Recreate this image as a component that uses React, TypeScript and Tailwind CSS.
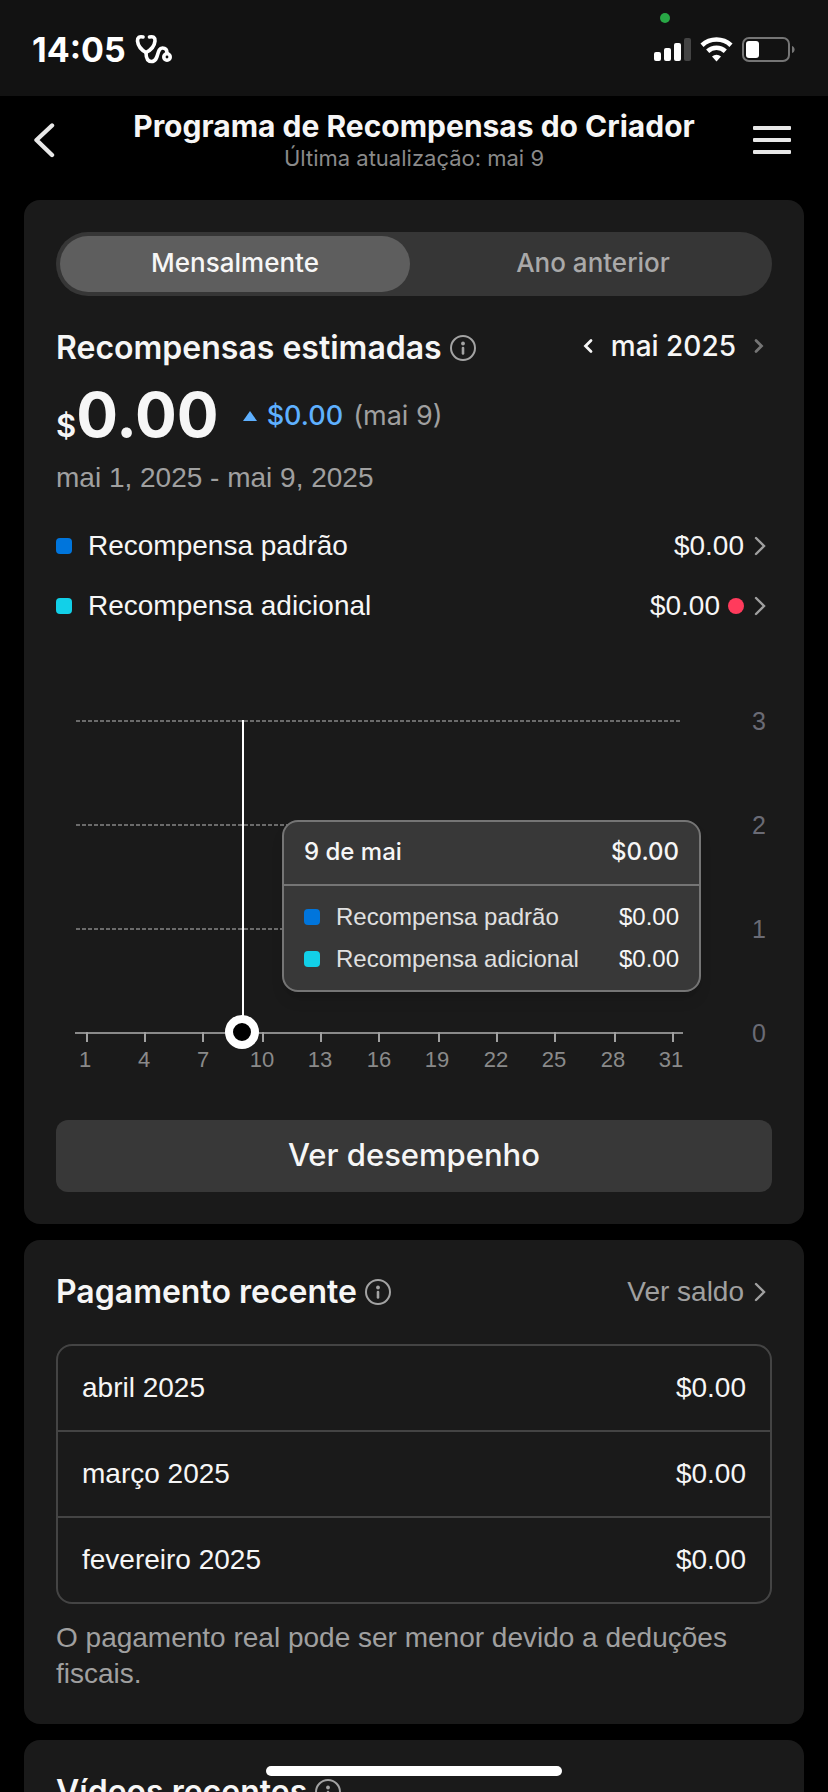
import { useState } from 'react'
import clsx from 'clsx'

type Reward = { name: string; amount: string; color: string; unread?: boolean }

const REWARDS: Reward[] = [
  { name: 'Recompensa padrão', amount: '$0.00', color: 'bg-[#0075dc]' },
  { name: 'Recompensa adicional', amount: '$0.00', color: 'bg-[#12d0e8]', unread: true },
]

const PAYMENTS = [
  { month: 'abril 2025', amount: '$0.00' },
  { month: 'março 2025', amount: '$0.00' },
  { month: 'fevereiro 2025', amount: '$0.00' },
]

const TABS = ['Mensalmente', 'Ano anterior']

// day, tick x, label x
const DAYS = [
  [1, 31, 29],
  [4, 89, 88],
  [7, 147, 147],
  [10, 207, 206],
  [13, 265, 264],
  [16, 323, 323],
  [19, 383, 381],
  [22, 441, 440],
  [25, 499, 498],
  [28, 559, 557],
  [31, 617, 615],
]

const GRID = [
  { value: 3, y: 85 },
  { value: 2, y: 189 },
  { value: 1, y: 293 },
]

function InfoIcon() {
  return (
    <svg width="26" height="26" viewBox="0 0 26 26" fill="none" aria-hidden="true">
      <circle cx="13" cy="13" r="12" stroke="#a3a3a3" strokeWidth="2" />
      <circle cx="13" cy="8.5" r="1.9" fill="#a3a3a3" />
      <path d="M13 13v5.500" stroke="#a3a3a3" strokeWidth="2.6" strokeLinecap="round" />
    </svg>
  )
}

function ChevronIcon({ className }: { className?: string }) {
  return (
    <svg width="12" height="20" viewBox="0 0 12 20" fill="none" className={className} aria-hidden="true">
      <path d="M2 2 10 10l-8 8" stroke="currentColor" strokeWidth="2.4" strokeLinecap="round" />
    </svg>
  )
}

// Smaller, heavier chevron used by the month switcher
function MonthChevronIcon({ className }: { className?: string }) {
  return (
    <svg width="10" height="16" viewBox="0 0 10 16" fill="none" className={className} aria-hidden="true">
      <path d="M2 2.500 7.500 8 2 13.500" stroke="currentColor" strokeWidth="2.8" strokeLinecap="round" />
    </svg>
  )
}

function StatusBar() {
  return (
    <div className="relative flex h-24 shrink-0 items-center justify-between bg-[#121212] px-8 pt-0.5">
      <div className="flex items-center gap-2 text-white">
        <span className="font-[Inter,sans-serif] text-[34px] font-bold">14:05</span>
        <svg width="40" height="32" viewBox="0 0 40 32" fill="none" stroke="white" strokeWidth="3.6" strokeLinecap="round">
          <path d="M9 4C5.500 3 3.500 4.500 3.500 8c.5 5 4 9 8.500 11.500C17 17 20.500 13 21 8c.3-3.500-2-5-5.500-4" />
          <path d="M12 19.500c0 6 1.500 9 5.500 9 8 0 4.500-13.500 11-13.500 3 0 4.500 2 4.500 5" />
          <circle cx="33" cy="24" r="3.200" />
        </svg>
      </div>
      <span className="absolute top-[13px] right-[158px] size-2.5 rounded-full bg-[#28a745]" />
      <svg width="144" height="28" viewBox="0 0 144 28" fill="none" aria-label="Sinal, Wi-Fi e bateria">
        <rect x="2" y="17" width="7" height="9" rx="2" fill="white" />
        <rect x="12" y="13" width="7" height="13" rx="2" fill="white" />
        <rect x="22" y="8" width="7" height="18" rx="2" fill="white" />
        <rect x="32" y="3" width="7" height="23" rx="2" fill="#444" />
        <g stroke="white" strokeWidth="4.600">
          <path d="M50 10.200a21.500 21.500 0 0 1 29 0" />
          <path d="M55.700 16.200a13 13 0 0 1 17.600 0" />
        </g>
        <path d="M60 21.500a6.600 6.600 0 0 1 9 0l-4.500 5z" fill="white" />
        <rect x="91" y="3" width="46" height="23" rx="6" stroke="#757575" strokeWidth="2" />
        <rect x="94" y="6" width="13" height="17" rx="3" fill="white" />
        <path d="M140 11c3.500 1 3.500 6 0 7z" fill="#757575" />
      </svg>
    </div>
  )
}

function Header() {
  return (
    <header className="flex h-[104px] shrink-0 items-start justify-between px-8 pt-3">
      <button aria-label="Voltar" className="mt-3.5 w-12 text-[#e8e8e8]">
        <svg width="24" height="36" viewBox="0 0 24 36" fill="none">
          <path d="M20 3.500 4.500 18 20 33" stroke="currentColor" strokeWidth="4.400" strokeLinecap="round" strokeLinejoin="round" />
        </svg>
      </button>
      <div className="text-center font-[Inter,sans-serif]">
        <h1 className="text-[30px] leading-9 font-bold text-[#f6f6f6]">Programa de Recompensas do Criador</h1>
        <p className="text-[22px] leading-7 text-[#8a8a8a]">Última atualização: mai 9</p>
      </div>
      <button aria-label="Menu" className="mt-3.5 w-12 text-[#e8e8e8]">
        <svg width="48" height="36" viewBox="0 0 48 36" fill="currentColor">
          <rect x="5" y="4" width="38" height="4" rx="1" />
          <rect x="5" y="16" width="38" height="4" rx="1" />
          <rect x="5" y="28" width="38" height="4" rx="1" />
        </svg>
      </button>
    </header>
  )
}

function SectionTitle({ children }: { children: string }) {
  return (
    <div className="flex items-center gap-2">
      <h2 className="font-[Inter,sans-serif] text-[32px] leading-10 font-semibold text-[#f6f6f6]">{children}</h2>
      <button aria-label="Mais informações">
        <InfoIcon />
      </button>
    </div>
  )
}

function Tooltip() {
  return (
    <div className="absolute top-[184px] left-[226px] w-[419px] rounded-2xl border-2 border-[#757575] bg-[#383838] text-[24px] shadow-lg">
      <div className="flex h-16 items-center justify-between border-b-2 border-[#757575] px-5 pb-0.5 font-[Inter,sans-serif] font-medium">
        <span>9 de mai</span>
        <span>$0.00</span>
      </div>
      <ul className="pt-2.5 pb-2.5">
        {REWARDS.map((r) => (
          <li key={r.name} className="flex h-[42px] items-center px-5">
            <span className={clsx('mr-4 size-4 rounded', r.color)} />
            <span className="flex-1 text-[#e0e0e0]">{r.name}</span>
            <span>{r.amount}</span>
          </li>
        ))}
      </ul>
    </div>
  )
}

function RewardsChart() {
  return (
    <div className="relative">
      <svg viewBox="0 0 716 452" className="w-full font-['Liberation_Sans',Arial,sans-serif]">
        {GRID.map((g) => (
          <g key={g.value}>
            <path d={`M20 ${g.y}H624`} stroke="#6b6b6b" strokeWidth="2" strokeDasharray="4 2" />
            <text x="703" y={g.y + 9} textAnchor="middle" fontSize="25" fill="#6a6b75">
              {g.value}
            </text>
          </g>
        ))}
        <text x="703" y="406" textAnchor="middle" fontSize="25" fill="#6a6b75">
          0
        </text>
        <path d="M19 397H627" stroke="#8a8a8a" strokeWidth="2" />
        {DAYS.map(([day, tick, label]) => (
          <g key={day}>
            <path d={`M${tick} 396v10`} stroke="#a0a0a0" strokeWidth="2" />
            <text x={label} y="431" textAnchor="middle" fontSize="22" fill="#8a8a8a">
              {day}
            </text>
          </g>
        ))}
        <path d="M187 84v300" stroke="white" strokeWidth="2" />
        <circle cx="186" cy="396" r="13" fill="black" stroke="white" strokeWidth="8" />
      </svg>
      <Tooltip />
    </div>
  )
}

function EstimatedRewards() {
  const [tab, setTab] = useState(TABS[0])

  return (
    <section className="rounded-2xl bg-[#1a1a1a] p-8">
      <div role="tablist" className="flex h-16 gap-2 rounded-full bg-[#363636] p-1">
        {TABS.map((t) => (
          <button
            key={t}
            role="tab"
            aria-selected={t === tab}
            onClick={() => setTab(t)}
            className={clsx(
              'flex-1 rounded-full pb-1 font-[Inter,sans-serif] text-[26px] font-medium',
              t === tab ? 'bg-[#5e5e5e] text-[#f6f6f6]' : 'text-[#a9a9a9]',
            )}
          >
            {t}
          </button>
        ))}
      </div>

      <div className="mt-[30px] flex h-11 items-center justify-between">
        <SectionTitle>Recompensas estimadas</SectionTitle>
        <div className="flex items-center gap-[18px] pb-1 font-[Inter,sans-serif] text-[28px] font-medium">
          <button aria-label="Mês anterior">
            <MonthChevronIcon className="rotate-180" />
          </button>
          <span>mai 2025</span>
          <button aria-label="Próximo mês" disabled className="mr-2 text-[#757575]">
            <MonthChevronIcon />
          </button>
        </div>
      </div>

      <div className="mt-3.5 flex h-16 items-center font-[Inter,sans-serif] text-[27px]">
        <p className="flex items-baseline text-[#f6f6f6]">
          <span className="text-[31px] font-semibold">$</span>
          <span className="text-[62px] leading-16 font-bold">0.00</span>
        </p>
        <svg width="14" height="10" viewBox="0 0 14 10" className="mr-2.5 ml-6" aria-hidden="true">
          <path d="M7 0 14 10H0z" fill="#5eb0ff" />
        </svg>
        <span className="font-medium text-[#5eb0ff]">$0.00</span>
        <span className="ml-2.5 text-[#a0a0a0]">(mai 9)</span>
      </div>
      <p className="mt-3 text-[28px] leading-9 text-[#a0a0a0]">mai 1, 2025 - mai 9, 2025</p>

      <ul className="mt-5 text-[28px]">
        {REWARDS.map((r) => (
          <li key={r.name}>
            <a href="#" className="flex h-[60px] items-center">
              <span className={clsx('mr-4 size-4 rounded', r.color)} />
              <span className="flex-1">{r.name}</span>
              <span>{r.amount}</span>
              {r.unread && <span className="ml-2 size-4 rounded-full bg-[#ff3b5c]" />}
              <ChevronIcon className="mr-1.5 ml-2.5 text-[#a0a0a0]" />
            </a>
          </li>
        ))}
      </ul>

      <RewardsChart />

      <button className="mt-8 h-[72px] w-full rounded-xl bg-[#383838] pb-0.5 font-[Inter,sans-serif] text-[31px] font-medium">
        Ver desempenho
      </button>
    </section>
  )
}

function RecentPayments() {
  return (
    <section className="rounded-2xl bg-[#1a1a1a] p-8">
      <div className="flex h-10 items-center justify-between">
        <SectionTitle>Pagamento recente</SectionTitle>
        <a href="#" className="flex items-center text-[28px] text-[#a0a0a0]">
          Ver saldo
          <ChevronIcon className="mr-1.5 ml-2.5" />
        </a>
      </div>
      <div className="mt-8 rounded-2xl border-2 border-[#444]">
        <table className="w-full text-[28px]">
          <tbody className="divide-y-2 divide-[#444]">
            {PAYMENTS.map((p) => (
              <tr key={p.month} className="h-[86px] first:h-[85px] last:h-[85px]">
                <th scope="row" className="pl-6 text-left font-normal">
                  {p.month}
                </th>
                <td className="pr-6 text-right">{p.amount}</td>
              </tr>
            ))}
          </tbody>
        </table>
      </div>
      <p className="mt-4 text-[28px] leading-9 text-[#a0a0a0]">
        O pagamento real pode ser menor devido a deduções fiscais.
      </p>
    </section>
  )
}

export default function App() {
  return (
    <div className="relative flex h-screen flex-col overflow-hidden bg-black font-['Liberation_Sans',Arial,sans-serif] text-[#f6f6f6]">
      <StatusBar />
      <Header />
      <main className="flex min-h-0 flex-1 flex-col gap-4 overflow-y-auto px-6 [scrollbar-width:none] *:shrink-0">
        <EstimatedRewards />
        <RecentPayments />
        <section className="rounded-2xl bg-[#1a1a1a] p-8">
          <SectionTitle>Vídeos recentes</SectionTitle>
        </section>
      </main>
      <div className="absolute bottom-4 left-1/2 h-2.5 w-[296px] -translate-x-1/2 rounded-full bg-white" />
    </div>
  )
}
